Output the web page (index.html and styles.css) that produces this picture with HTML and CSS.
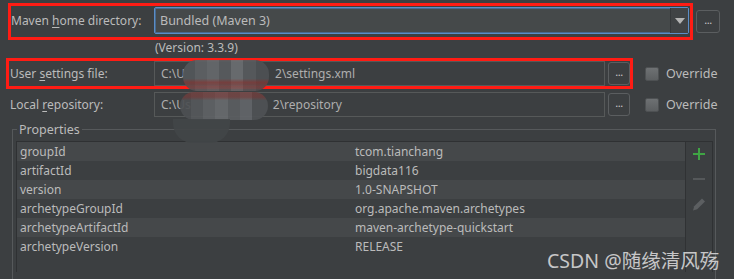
FILE: index.html
```html
<!DOCTYPE html>
<html lang="en">
<head>
  <meta charset="UTF-8" />
  <title>Maven settings</title>
  <link rel="stylesheet" href="styles.css">
</head>
<body>
  <div class="form">
    <div class="row">
      <div class="hl hl-home">
        <label class="lbl lbl-home">Maven <u>h</u>ome directory:</label>
        <div class="combo">
          <span class="combo-text">Bundled (Maven 3)</span>
          <span class="combo-btn"><span class="arrow"></span></span>
        </div>
      </div>
      <button class="browse browse-home">...</button>
    </div>

    <div class="version">(Version: 3.3.9)</div>

    <div class="row">
      <div class="hl hl-red">
        <label class="lbl">User <u>s</u>ettings file:</label>
        <div class="field">C:\U<span class="hidden-part"></span>2\settings.xml</div>
        <button class="browse">...</button>
      </div>
      <label class="override"><span class="check"></span>Override</label>
    </div>

    <div class="row">
      <div class="hl">
        <label class="lbl">Local <u>r</u>epository:</label>
        <div class="field">C:\Us<span class="hidden-part short"></span>2\repository</div>
        <button class="browse">...</button>
      </div>
      <label class="override"><span class="check"></span>Override</label>
    </div>

    <div class="group">
      <div class="group-title">Properties</div>
      <div class="table-wrap">
        <div class="table">
          <div class="tr"><span class="key">groupId</span><span>tcom.tianchang</span></div>
          <div class="tr"><span class="key">artifactId</span><span>bigdata116</span></div>
          <div class="tr"><span class="key">version</span><span>1.0-SNAPSHOT</span></div>
          <div class="tr"><span class="key">archetypeGroupId</span><span>org.apache.maven.archetypes</span></div>
          <div class="tr"><span class="key">archetypeArtifactId</span><span>maven-archetype-quickstart</span></div>
          <div class="tr"><span class="key">archetypeVersion</span><span>RELEASE</span></div>
        </div>
        <div class="toolbar">
          <svg class="tool" width="16" height="16" viewBox="0 0 16 16"><path d="M8 2v12M2 8h12" stroke="#3fa444" stroke-width="2"/></svg>
          <svg class="tool" width="16" height="16" viewBox="0 0 16 16"><path d="M2 8h12" stroke="#55585a" stroke-width="2"/></svg>
          <svg class="tool" width="16" height="16" viewBox="0 0 16 16"><path d="M2 14.5L3.2 10.3 11 2.5 14 5.5 6.2 13.3Z" fill="#5c5f61"/></svg>
        </div>
      </div>
    </div>
  </div>

  <!-- pixelated blur over the user name -->
  <div class="mosaic m1"></div>
  <div class="mosaic m2"></div>
  <div class="mosaic m3"></div>

  <div class="watermark">CSDN @随缘清风殇</div>
</body>
</html>
```

FILE: styles.css
```css
body {
  margin: 0;
  background: #3c3f41;
  color: #bbbbbb;
  font-family: "Noto Sans", "Noto Sans CJK SC", sans-serif;
  font-size: 12px;
  height: 279px;
  overflow: hidden;
}

.form {
  padding-top: 3px;
}

.row {
  display: flex;
  align-items: center;
}

u {
  text-decoration-thickness: 1px;
  text-underline-offset: 2px;
}

/* highlight boxes */
.hl {
  display: flex;
  align-items: center;
  border: 3px solid transparent;
  height: 25px;
  margin-left: 6px;
  width: 621px;
}

.hl-red {
  border-color: #ff1c14;
}

.hl-home {
  border-color: #ff1c14;
  margin-left: 8px;
  width: 679px;
  height: 31px;
  align-items: flex-start;
}

.lbl {
  width: 145px;
  padding-left: 1px;
  box-sizing: border-box;
  white-space: nowrap;
}

.lbl-home {
  width: 143px;
  padding-left: 0;
  line-height: 30px;
}

.combo {
  display: flex;
  margin-top: 1px;
  width: 535px;
  height: 27px;
  box-sizing: border-box;
  border: 1px solid #5b8dc6;
  box-shadow: inset 0 0 0 1px #46698f;
  border-radius: 2px;
  background: #45494a;
}

.combo-text {
  flex: 1;
  padding-left: 5px;
  line-height: 25px;
  font-size: 12.5px;
}

.combo-btn {
  width: 17px;
  border-left: 1px solid #35383a;
  background: #404345;
  display: flex;
  align-items: center;
  justify-content: center;
}

.arrow {
  width: 0;
  height: 0;
  border-left: 5px solid transparent;
  border-right: 5px solid transparent;
  border-top: 6px solid #b4b4b4;
}

.browse {
  width: 22px;
  height: 23px;
  margin-left: 3px;
  padding: 0 0 4px;
  box-sizing: border-box;
  border: 1px solid #5b5e60;
  border-radius: 3px;
  background: #3c3f41;
  color: #c8c8c8;
  font-family: "Noto Sans", sans-serif;
  font-size: 11px;
  letter-spacing: -0.5px;
}

.browse-home {
  width: 24px;
  margin-left: 3px;
}

.version {
  padding-left: 155px;
  line-height: 16px;
  height: 16px;
  margin-bottom: 2px;
}

.field {
  width: 451px;
  height: 25px;
  box-sizing: border-box;
  border: 1px solid #565959;
  padding-left: 6px;
  line-height: 23px;
  background: #3c3f41;
  color: #aeaeae;
  white-space: nowrap;
}

.hidden-part {
  display: inline-block;
  width: 90px;
}

.hidden-part.short {
  width: 82px;
}

.override {
  display: flex;
  align-items: center;
  margin-left: 12px;
  font-size: 12.5px;
}

.check {
  width: 14px;
  height: 14px;
  box-sizing: border-box;
  margin-right: 7px;
  border: 1px solid #4e5153;
  border-radius: 2px;
  background: linear-gradient(#6e7173, #5c5f61);
}

/* properties group */
.group {
  margin: 9px 18px 0 12px;
  border: 1px solid #56595b;
  border-bottom: none;
  height: 150px;
}

.group-title {
  display: table;
  margin: -9px 0 0 4px;
  padding: 0 2px;
  line-height: 17px;
  background: #3c3f41;
  font-size: 12.5px;
}

.table-wrap {
  display: flex;
  margin: 3px 2px 0 3px;
  border: 1px solid #2f3133;
  border-bottom: none;
  height: 130px;
}

.table {
  flex: 1;
  background: #3c3f41;
}

.tr {
  display: flex;
  height: 19px;
  line-height: 19px;
}

.tr:nth-child(odd) {
  background: #45484a;
}

.tr span {
  padding-left: 3px;
  white-space: nowrap;
}

.tr .key {
  width: 335px;
  box-sizing: border-box;
}

.toolbar {
  width: 26px;
  border-left: 1px solid #303234;
  display: flex;
  flex-direction: column;
  align-items: center;
  gap: 9px;
  padding-top: 4px;
}

.tool {
  display: block;
}

/* mosaic over hidden text */
.mosaic {
  position: absolute;
  border-radius: 14px;
  opacity: 0.92;
}

.m1 {
  left: 183px;
  top: 60px;
  width: 86px;
  height: 31px;
  background:
    linear-gradient(to bottom, transparent 60%, rgba(150, 40, 35, 0.55) 72%, rgba(90, 60, 60, 0.2) 100%),
    linear-gradient(to right, #53575a 0 14%, #5e6164 14% 28%, #66696c 28% 42%, #595c5f 42% 56%, #6b6e71 56% 70%, #585b5e 70% 85%, #4e5154 85% 100%);
}

.m2 {
  left: 180px;
  top: 92px;
  width: 88px;
  height: 28px;
  background:
    linear-gradient(to bottom, rgba(140, 40, 35, 0.45) 0 18%, transparent 30%),
    linear-gradient(to right, #4d5053 0 12%, #56595c 12% 26%, #5f6265 26% 40%, #686b6e 40% 54%, #5b5e61 54% 68%, #63666a 68% 82%, #4f5255 82% 100%);
}

.m3 {
  left: 173px;
  top: 119px;
  width: 57px;
  height: 24px;
  border-radius: 0 0 20px 20px;
  background: #424548;
}

.watermark {
  position: absolute;
  left: 547px;
  top: 245px;
  font-family: "Noto Sans", "Noto Sans CJK SC", sans-serif;
  font-size: 19.5px;
  color: rgba(225, 225, 225, 0.85);
  white-space: nowrap;
}
```
